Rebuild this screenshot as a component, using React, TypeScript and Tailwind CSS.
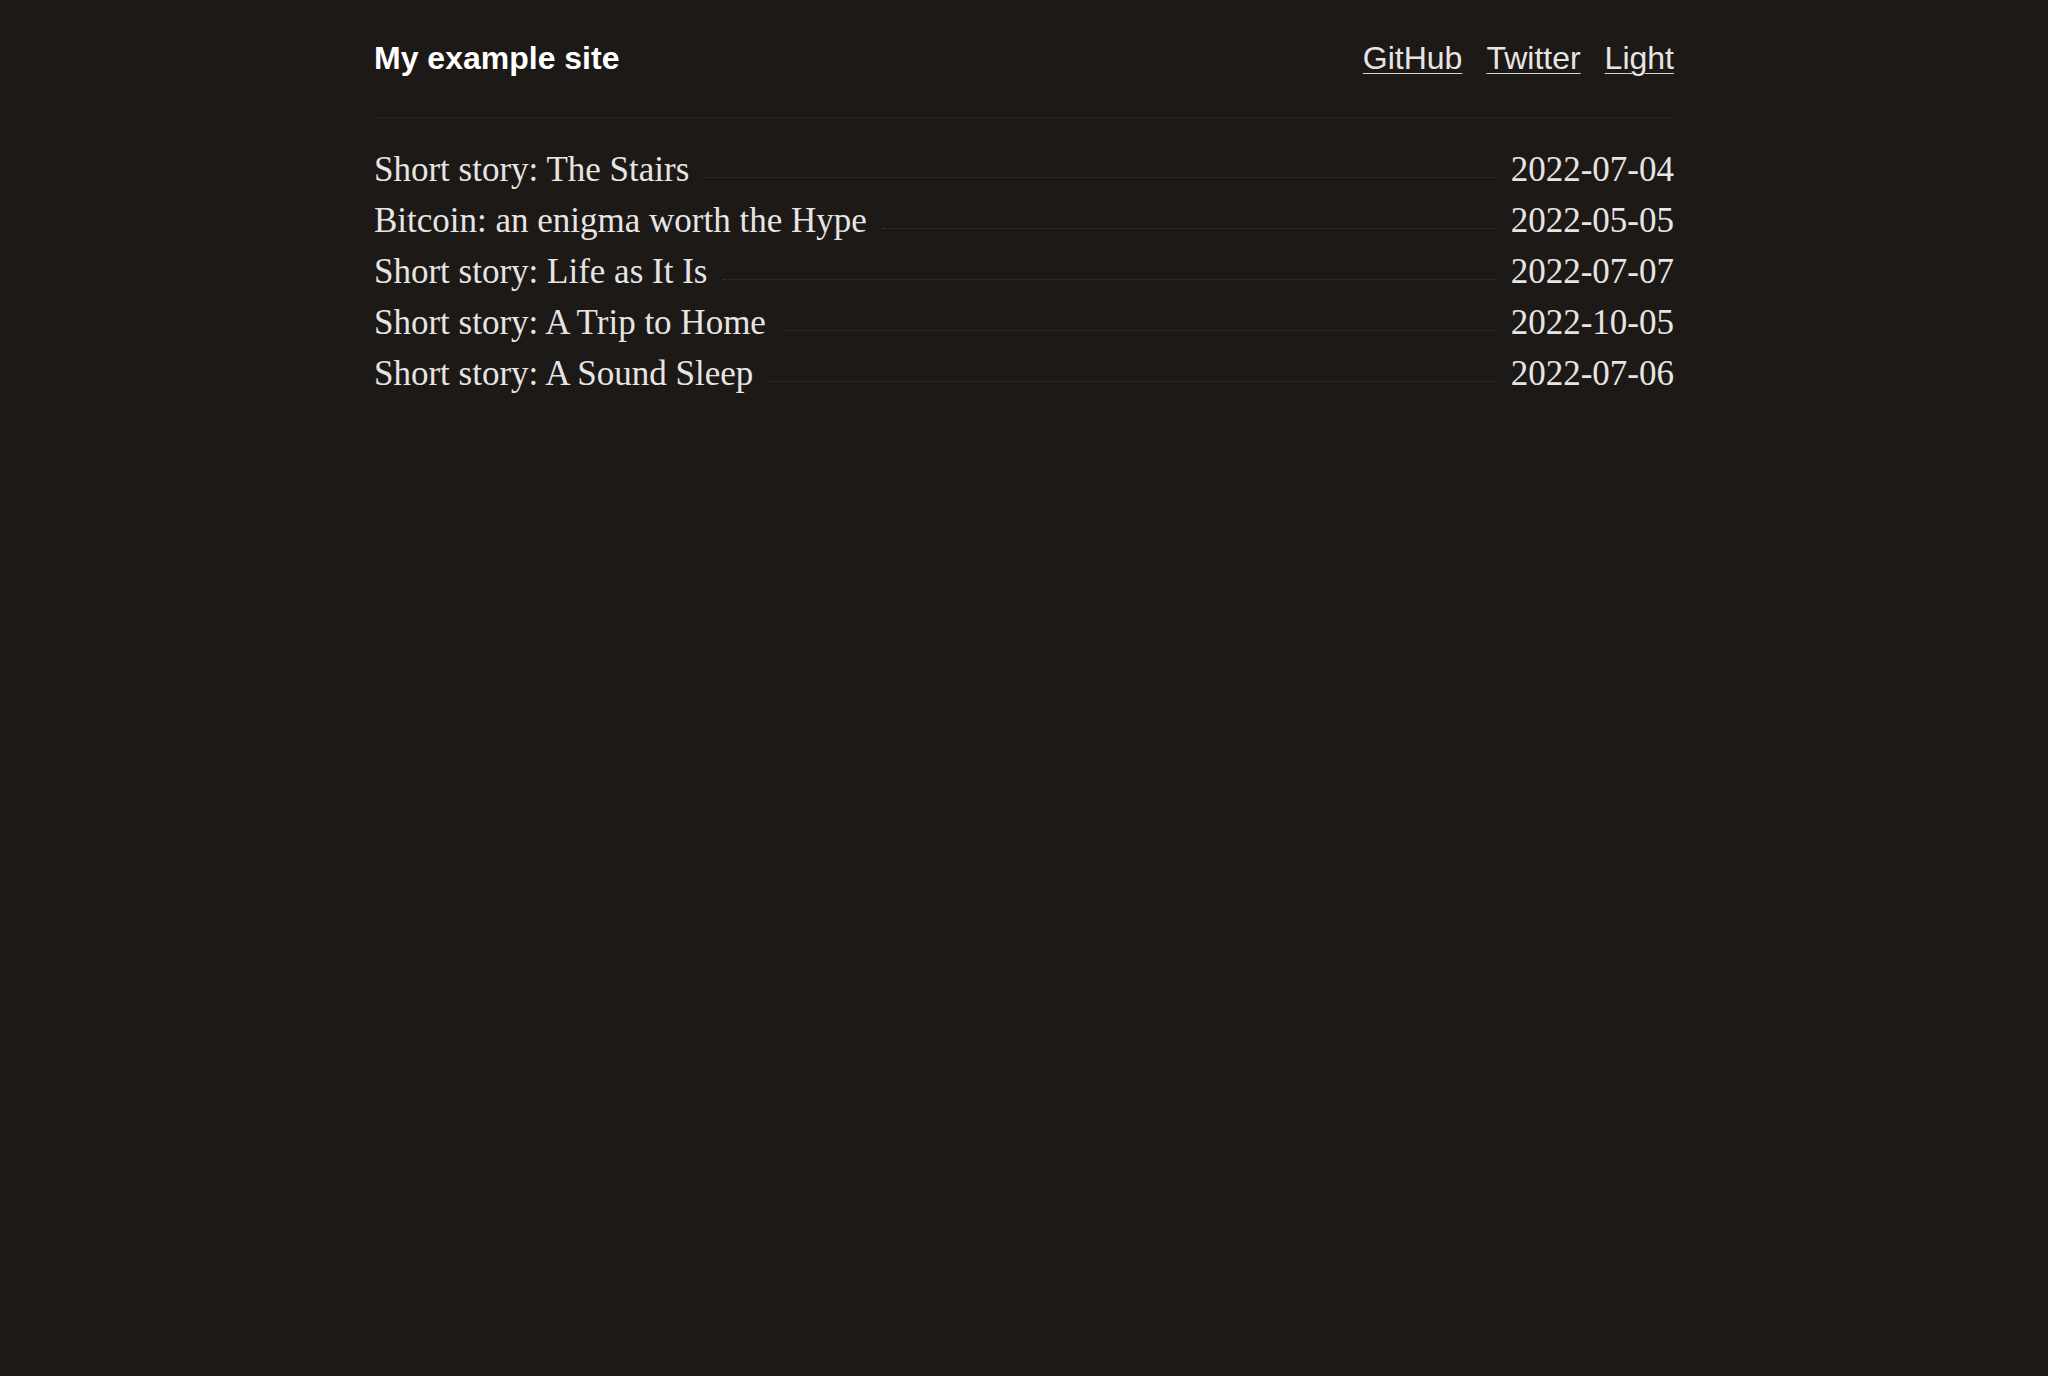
import React from "react";

const posts = [
  { title: "Short story: The Stairs", date: "2022-07-04" },
  { title: "Bitcoin: an enigma worth the Hype", date: "2022-05-05" },
  { title: "Short story: Life as It Is", date: "2022-07-07" },
  { title: "Short story: A Trip to Home", date: "2022-10-05" },
  { title: "Short story: A Sound Sleep", date: "2022-07-06" },
];

export default function App() {
  return (
    <div className="min-h-screen w-full bg-[#1c1917] text-[#e7e5e4]">
      <div className="mx-auto max-w-[1300px]">
        <header className="flex items-center justify-between border-b border-[#2a2624] pt-[40px] pb-[40px] font-['Liberation_Sans',Arial,sans-serif] text-[32px] leading-[1.15]">
          <a className="font-bold text-white">My example site</a>
          <nav className="flex gap-[24px]">
            <a className="underline decoration-[#d6d3d1] decoration-1 underline-offset-[4px]">GitHub</a>
            <a className="underline decoration-[#d6d3d1] decoration-1 underline-offset-[4px]">Twitter</a>
            <a className="underline decoration-[#d6d3d1] decoration-1 underline-offset-[4px]">Light</a>
          </nav>
        </header>
        <ul className="mt-[26px] font-['Liberation_Serif',Georgia,serif] text-[35px] leading-[51px]">
          {posts.map((p) => (
            <li key={p.title} className="flex items-baseline">
              <a>{p.title}</a>
              <span className="mx-4 flex-1 -translate-y-[3px] border-b border-dotted border-[#3d3936]" />
              <span>{p.date}</span>
            </li>
          ))}
        </ul>
      </div>
    </div>
  );
}
